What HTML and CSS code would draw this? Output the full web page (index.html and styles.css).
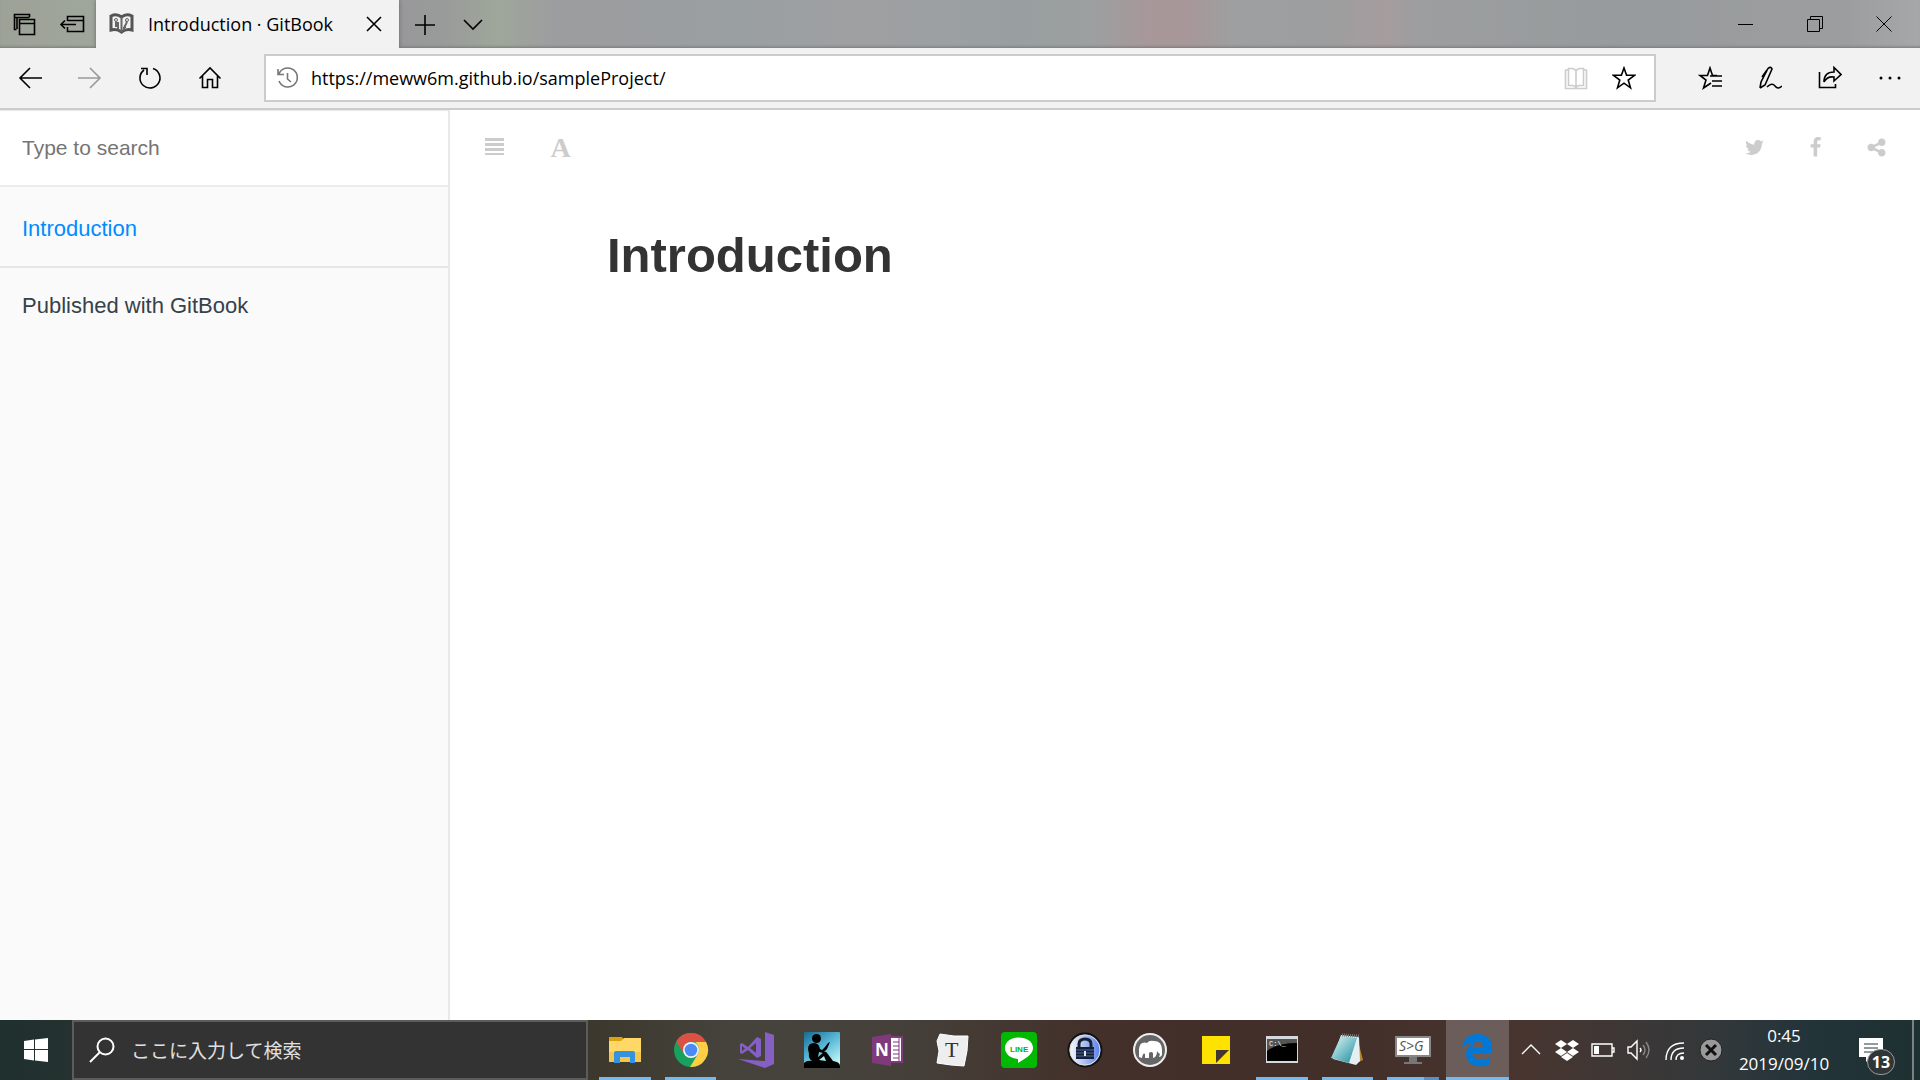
FILE: index.html
```html
<!DOCTYPE html>
<html lang="ja">
<head>
<meta charset="utf-8">
<meta name="viewport" content="width=device-width, initial-scale=1">
<title>Introduction · GitBook</title>
<link rel="stylesheet" href="styles.css">
</head>
<body>
<header class="tabbar">
  <button class="tab-tool" aria-label="Set-aside tabs"><svg class="line" width="24" height="24" viewBox="0 0 24 24"><path d="M4.500 17.500H2.500V2.500H17.500V5M2.500 5.500H17.500M7.500 7.500H22.500V22.500H7.500ZM7.500 11.500H22.500M5 17V5.500"/></svg></button>
  <button class="tab-tool" aria-label="Set tabs aside"><svg class="line" width="26" height="24" viewBox="0 0 26 24"><path d="M8.500 9V4.500H24.500V19.500H8.500V15M8.500 8.500H24.500M17 12.500H2M6 8.500L2 12.500L6 16.500"/></svg></button>
  <div class="tab">
    <svg width="25" height="22" viewBox="0 0 25 22"><path d="M2 3C6 1 10 2 12.500 4C15 2 19 1 23 3V17C19 16 15 17 12.500 19C10 17 6 16 2 17Z" fill="#f2f2f2" stroke="#555" stroke-width="3"/><path d="M12.500 4V19M7 7V14M17 14C13 14 19 12 17.500 7M15 14V17M9 16V9" fill="none" stroke="#666" stroke-width="2"/><circle cx="7" cy="7" r="1.500" fill="#eee" stroke="#666"/><circle cx="18" cy="7" r="1.500" fill="#eee" stroke="#666"/></svg>
    <span class="tab-title">Introduction · GitBook</span>
    <button class="tab-close" aria-label="Close tab"><svg class="line" width="16" height="16" viewBox="0 0 16 16"><path d="M1 1L15 15M15 1L1 15"/></svg></button>
  </div>
  <div class="tab-actions">
    <button class="tab-tool" aria-label="New tab"><svg class="line" width="22" height="22" viewBox="0 0 22 22"><path d="M1 12H21M11 2V22"/></svg></button>
    <button class="tab-tool" aria-label="Tab previews"><svg class="line" width="22" height="22" viewBox="0 0 22 22"><path d="M2 7L11 16L20 7"/></svg></button>
  </div>
  <div class="window-controls">
    <button aria-label="Minimize"><svg class="thin" width="16" height="16" viewBox="0 0 16 16"><path d="M0 8.500H15"/></svg></button>
    <button aria-label="Restore"><svg class="thin" width="16" height="16" viewBox="0 0 16 16"><path d="M.5 3.500H12.500V15.500H.5ZM3.500 3V.5H15.500V12.500H13"/></svg></button>
    <button aria-label="Close"><svg class="thin" width="16" height="16" viewBox="0 0 16 16"><path d="M.5 .5L15.500 15.500M15.500 .5L.5 15.500"/></svg></button>
  </div>
</header>

<nav class="toolbar" aria-label="Browser">
  <button aria-label="Back"><svg class="line" width="24" height="24" viewBox="0 0 24 24"><path d="M24 12H2M12 2L2 12L12 22"/></svg></button>
  <button class="disabled" aria-label="Forward" disabled><svg class="line" width="24" height="24" viewBox="0 0 24 24"><path d="M0 12H22M12 2L22 12L12 22"/></svg></button>
  <button aria-label="Refresh"><svg class="line" width="24" height="24" viewBox="0 0 24 24"><path d="M15 2.500A10 10 0 1 1 6 4M3 2.500H9V9"/></svg></button>
  <button aria-label="Home"><svg class="line" width="24" height="24" viewBox="0 0 24 24"><path d="M1.500 12.500L12 2L22.500 12.500M4.500 10V21.500H9.500V13.500H14.500V21.500H19.500V10"/></svg></button>
  <div class="address">
    <svg class="line history" width="24" height="24" viewBox="0 0 24 24"><path d="M3 8A9.500 9.500 0 1 1 3 15M2 3V8.500H8M11.500 7V13L15 16"/></svg>
    <input type="text" aria-label="Address" value="https://meww6m.github.io/sampleProject/">
    <button class="faint" aria-label="Reading view"><svg class="line" width="24" height="24" viewBox="0 0 24 24"><path d="M4 4H1.500V22.500H22.500V4H20M4.500 2.500H9L12 4.500L15 2.500H19.500V19.500H15L12 21L9 19.500H4.500ZM12 4.500V21"/></svg></button>
    <button aria-label="Add to favorites"><svg class="line" width="24" height="24" viewBox="0 0 24 24"><path d="M12 2L14.600 9.300H22.500L16.200 14L18.500 21.800L12 17.200L5.500 21.800L7.800 14L1.500 9.300H9.400Z"/></svg></button>
  </div>
  <button aria-label="Favorites"><svg class="line" width="24" height="24" viewBox="0 0 24 24"><path d="M19 9.500H14.500L12 2L9.500 9.500H2L8 14L5.500 22L13 17M12 10H24M14 15H24M14 20H24"/></svg></button>
  <button aria-label="Add notes"><svg class="line" width="24" height="24" viewBox="0 0 24 24"><path d="M2 22L3 16L10 2.500Q13 0 14 3L7 19L2 22M4 11L9 4M9 21Q14 16 17 20T24 20"/></svg></button>
  <button aria-label="Share"><svg class="line" width="24" height="24" viewBox="0 0 24 24"><path d="M1.500 6V21.500H17.500V18M6 16Q6 6 16 6V1.500L23 8.500L16 15V11Q9 10 6 16Z"/></svg></button>
  <button aria-label="More"><svg width="24" height="24" viewBox="0 0 24 24"><circle cx="3" cy="12" r="1.500"/><circle cx="12" cy="12" r="1.500"/><circle cx="21" cy="12" r="1.500"/></svg></button>
</nav>

<div class="book">
  <aside class="sidebar">
    <input class="book-search" type="text" aria-label="Search" placeholder="Type to search">
    <nav class="summary"><a class="active" href="#intro">Introduction</a><a href="#gitbook">Published with GitBook</a></nav>
  </aside>
  <main class="page">
    <div class="book-header">
      <button aria-label="Toggle sidebar"><svg width="21" height="21" viewBox="0 0 21 21"><path d="M0 1H19V4H0ZM0 6H19V9H0ZM0 11H19V14H0ZM0 16H19V18H0Z"/></svg></button>
      <button class="font-button" aria-label="Font settings">A</button>
      <div class="sharing">
        <button aria-label="Twitter"><svg width="21" height="21" viewBox="0 0 1792 1792"><path d="M1684 408q-67 98-162 167 1 14 1 42 0 130-38 259.500t-115.500 248.500-184.500 210.500-258 146-323 54.500q-271 0-496-145 35 4 78 4 225 0 401-138-105-2-188-64.500t-114-159.500q33 5 61 5 43 0 85-11-112-23-185.500-111.500t-73.500-205.500v-4q68 38 146 41-66-44-105-115t-39-154q0-88 44-163 121 149 294.500 238.500t371.500 99.500q-8-38-8-74 0-134 94.500-228.500t228.500-94.500q140 0 236 102 109-21 205-78-37 115-142 178 93-10 186-50z"/></svg></button>
        <button aria-label="Facebook"><svg width="21" height="21" viewBox="0 0 1792 1792"><path d="M1343 12v264h-157q-86 0-116 36t-30 108v189h293l-39 296h-254v759h-306v-759h-255v-296h255v-218q0-186 104-288.500t277-102.500q147 0 228 12z"/></svg></button>
        <button aria-label="Share page"><svg width="21" height="21" viewBox="0 0 1792 1792"><path d="M1344 1024q133 0 226.500 93.500t93.500 226.500-93.500 226.500-226.500 93.500-226.500-93.500-93.500-226.500q0-12 2-34l-360-180q-92 86-218 86-133 0-226.500-93.500t-93.500-226.500 93.500-226.500 226.500-93.500q126 0 218 86l360-180q-2-22-2-34 0-133 93.500-226.500t226.500-93.500 226.500 93.500 93.500 226.500-93.500 226.500-226.500 93.500q-126 0-218-86l-360 180q2 22 2 34t-2 34l360 180q92-86 218-86z"/></svg></button>
      </div>
    </div>
    <article class="content" id="intro"><h1>Introduction</h1></article>
  </main>
</div>

<footer class="taskbar">
  <button class="start" aria-label="Start"><svg width="24" height="24" viewBox="0 0 24 24" fill="#fff"><path d="M0 3L10 1.600V11H0ZM11 1.400L24 0V11H11ZM0 12H10V22.400L0 21ZM11 12H24V24L11 22.600Z"/></svg></button>
  <label class="task-search">
    <svg width="26" height="26" viewBox="0 0 26 26" fill="none" stroke="#fff" stroke-width="2"><circle cx="16.500" cy="9.500" r="8"/><path d="M11 15L1 25"/></svg>
    <input type="text" aria-label="Windows search" placeholder="ここに入力して検索">
  </label>
  <div class="apps">
    <button class="open" aria-label="File Explorer"><svg width="36" height="36" viewBox="0 0 36 36"><path d="M2 5H15L17 8L14 14H2Z" fill="#dda00f"/><path d="M2 9H14L17 6H34V30H2Z" fill="#ffd868"/><path d="M2 20H34V30H2Z" fill="#f6c64c"/><path d="M7 31V21Q7 19 9 19H26Q28 19 28 21V31H23V25H13V31Z" fill="#3393df"/></svg></button>
    <button class="open" aria-label="Chrome"><svg width="36" height="36" viewBox="0 0 36 36"><circle cx="18" cy="18" r="17" fill="#18a05e"/><path d="M3.300 9.500A17 17 0 0 1 33 10H18A8 8 0 0 0 11 22Z" fill="#dd5145"/><path d="M33 10A17 17 0 0 1 17 35L25 22Q28 15 22 10Z" fill="#ffce43"/><circle cx="18" cy="18" r="8" fill="#f3f3f3"/><circle cx="18" cy="18" r="6.300" fill="#4c8bf5"/></svg></button>
    <button aria-label="Visual Studio"><svg width="36" height="36" viewBox="0 0 36 36" fill="#865fc5"><path d="M27 0L36 3V32L27 36L0 27L27 29Z"/><path fill-rule="evenodd" d="M2 12L4 11L10 15L19 5L23 7V24L19 26L10 18L4 22L2 21ZM4 14V19L7 16.500ZM18 11L12 16L18 21Z"/></svg></button>
    <button aria-label="Kindle"><svg width="36" height="36" viewBox="0 0 36 36"><defs><linearGradient id="sky" x2=".7" y2="1"><stop stop-color="#176990"/><stop offset=".5" stop-color="#57b6d5"/><stop offset="1" stop-color="#bcf5f7"/></linearGradient></defs><rect width="36" height="36" rx="1" fill="url(#sky)"/><circle cx="12.500" cy="6.500" r="4.500"/><path d="M4 17Q4 11 10 11Q15 11 16 17L18 18L21 15L24 11L26 10L23 17L19 21L15 20L14 25L20 20Q22 19 23 21L29 29Q36 30 36 34V36H0V31Q3 28 8 29Q4 26 5 22Z"/><path d="M15 28L20 24L22 29Z" fill="#a2e8f1"/></svg></button>
    <button aria-label="OneNote"><svg width="36" height="36" viewBox="0 0 36 36"><path d="M20 5H32V30H20Z" fill="#fff" stroke="#80397b" stroke-width="2"/><path d="M23 10H29M23 14H29M23 18H29M23 22H29M23 26H29M29 5V30" stroke="#80397b"/><path d="M2 5L21 2V34L2 31Z" fill="#80397b"/><text x="5" y="24" class="icon-n">N</text></svg></button>
    <button aria-label="Typora"><svg width="36" height="36" viewBox="0 0 36 36"><path d="M5 2L19 4L33 4L32 19L29 34L16 33L2 31L4 19L2 9Z" fill="#eee" stroke="#fff"/><text x="10" y="25" class="icon-t">T</text></svg></button>
    <button aria-label="LINE"><svg width="36" height="36" viewBox="0 0 36 36"><rect width="36" height="36" rx="4" fill="#00b900"/><path d="M4 16C4 2 32 2 32 16C32 23 23 27 17 31V27C9 26 4 22 4 16Z" fill="#fff"/><text x="9" y="20" class="icon-line">LINE</text></svg></button>
    <button aria-label="KeePass"><svg width="36" height="36" viewBox="0 0 36 36"><defs><linearGradient id="pass"><stop stop-color="#fff"/><stop offset="1" stop-color="#537bea"/></linearGradient></defs><circle cx="18" cy="18" r="16.500" fill="url(#pass)" stroke="#111" stroke-width="2"/><circle cx="18" cy="18" r="15" fill="none" stroke="#ddd"/><path d="M12 15V12Q12 7 18 7Q24 7 24 12V15" fill="none" stroke="#162033" stroke-width="3"/><path d="M9 15H27V27H9Z" fill="#162033"/><path d="M9 18H27M9 21H27M9 24H27" stroke="#4c69a8"/><path d="M17 19H19V24H17Z" fill="#dde9ff"/></svg></button>
    <button aria-label="MAMP"><svg width="36" height="36" viewBox="0 0 36 36"><circle cx="18" cy="18" r="16" fill="#666" stroke="#eee" stroke-width="2"/><path d="M7 25V17Q8 9 15 11Q17 8 22 9Q30 9 30 18V23Q29 25 27 25L28 22Q26 21 25 19Q25 25 21 26V21Q19 19 17 21V26H13V22Q11 20 10 26Z" fill="#fff"/></svg></button>
    <button aria-label="Sticky Notes"><svg width="36" height="36" viewBox="0 0 36 36"><path d="M4 4H32V32H4Z" fill="#ffe300"/><path d="M18 18H31L18 31Z" fill="#44352f"/></svg></button>
    <button class="open" aria-label="Command Prompt"><svg width="36" height="36" viewBox="0 0 36 36"><path d="M2 4H34V31H2Z" fill="#d4d9de"/><path d="M3 7H33V29H3Z"/><path d="M3 7H33V11Q13 11 3 19Z" fill="#555"/><text x="5" y="14" class="icon-cmd">C:\_</text></svg></button>
    <button class="open" aria-label="Notepad"><svg width="36" height="36" viewBox="0 0 36 36"><defs><linearGradient id="note" x2="1" y2="1"><stop stop-color="#e4fbfb"/><stop offset="1" stop-color="#198b9c"/></linearGradient></defs><path d="M28 5L34 28L30 30Z" fill="#b48432"/><path d="M12 3L30 5L31 29L27 33L4 27Z" fill="#e5eef1"/><path d="M12 4L28 6L20 31L2 26Z" fill="url(#note)"/><path d="M13 3L30 4" stroke="#777" stroke-width="3" stroke-dasharray="1 1"/></svg></button>
    <button class="open grouped" aria-label="Screen to Gif"><svg width="36" height="36" viewBox="0 0 36 36"><path d="M14 25H22V30H27V32H9V30H14Z" fill="#777"/><path d="M1 5H35V24H1Z" fill="#fff" stroke="#888" stroke-width="2"/><text x="4" y="19" class="icon-sg">S&gt;G</text></svg></button>
    <button class="current" aria-label="Edge"><svg width="36" height="36" viewBox="0 0 36 36"><path d="M3 16Q5 2 19 2Q33 3 33 16V21H13Q14 28 22 28Q27 28 31 25V32Q26 35 19 34Q8 33 7 23Q7 15 14 11Q7 11 3 16ZM13 16H24Q24 9 19 9Q14 10 13 16Z" fill="#0078d7" fill-rule="evenodd"/></svg></button>
  </div>
  <div class="tray">
    <button aria-label="Hidden icons"><svg class="light" width="20" height="20" viewBox="0 0 20 20"><path d="M1 14L10 5L19 14"/></svg></button>
    <button aria-label="Dropbox"><svg width="24" height="24" viewBox="0 0 24 24" fill="#fff"><path d="M6 2L12 6L6 10L0 6ZM18 2L24 6L18 10L12 6ZM6 10L12 14L6 18L0 14ZM18 10L24 14L18 18L12 14ZM12 15L18 19L12 23L6 19Z"/></svg></button>
    <button aria-label="Battery"><svg class="light" width="24" height="24" viewBox="0 0 24 24"><path d="M1 6H21V18H1ZM21.500 10H23V14H21.500"/><path d="M3 8H8V16H3Z" fill="#fff" stroke="none"/></svg></button>
    <button aria-label="Volume"><svg class="light" width="24" height="24" viewBox="0 0 24 24"><path d="M1 9H4L10 3V21L4 15H1ZM13 10Q15 12 13 14"/><path d="M16 7Q20 12 16 17M19 4Q25 12 19 20" stroke="#888"/></svg></button>
    <button aria-label="Network"><svg class="light" width="24" height="24" viewBox="0 0 24 24"><path d="M3 22Q3 5 21 5M8 22Q8 10 21 10M13 22Q13 15 21 15"/><circle cx="19" cy="20" r="2" fill="#fff" stroke="none"/></svg></button>
    <button aria-label="Input disabled"><svg width="24" height="24" viewBox="0 0 24 24"><circle cx="12" cy="12" r="11" fill="#999" stroke="#222"/><path d="M7 7L17 17M17 7L7 17" stroke="#111" stroke-width="3"/></svg></button>
    <time class="clock" datetime="2019-09-10T00:45"><span>0:45</span><span>2019/09/10</span></time>
    <button class="notifications" aria-label="Notifications"><svg width="24" height="24" viewBox="0 0 24 24"><path d="M0 0H24V19H12L7 24V19H0Z" fill="#fff"/><path d="M5 6H19M5 10H19M5 14H19" stroke="#26343a"/></svg><span class="badge">13</span></button>
    <button class="show-desktop" aria-label="Show desktop"></button>
  </div>
</footer>
</body>
</html>
```
FILE: styles.css
```css
* { box-sizing: border-box; }
html, body { height: 100%; }
body { margin: 0; display: flex; flex-direction: column; background: #fff; font-family: "Open Sans", "Noto Sans CJK JP", sans-serif; color: #000; }
button, input { font: inherit; color: inherit; border: 0; padding: 0; background: none; }
button { display: flex; align-items: center; justify-content: center; flex: none; }
input { min-width: 0; outline: 0; }
svg { display: block; flex: none; }
.line { fill: none; stroke: currentColor; stroke-width: 1.6px; }
.thin { fill: none; stroke: #000; }
.light { fill: none; stroke: #fff; stroke-width: 1.4px; }

.tabbar { display: flex; flex: none; height: 48px; box-shadow: inset 0 -3px 3px -2px #777; background: linear-gradient(90deg, #9da298 0%, #9fa69c 5%, #98989a 21%, #999a99 23%, #9ea79a 26%, #9c9d9f 29%, #9a9fa1 38%, #9ea0a1 45%, #999fa1 53%, #9d9fa0 57%, #a89799 60%, #a79799 62%, #9e9fa0 64%, #9c9e9f 69%, #a69c9e 72%, #9c9e9f 74%, #979b9d 84%, #9c9d9e 96%, #a5a7a8 100%); }
.tab-tool { width: 48px; }
.tab { display: flex; align-items: center; width: 303px; padding: 0 12px 0 13px; background: #f2f2f2; box-shadow: 0 0 4px #666; clip-path: inset(0 -5px); }
.tab-title { flex: 1; margin-left: 14px; font-size: 18px; line-height: 24px; white-space: nowrap; }
.tab-close { width: 26px; height: 26px; }
.tab-actions { display: flex; padding-left: 2px; }
.window-controls { display: flex; margin-left: auto; padding-right: 2px; }
.window-controls button { width: 69px; }

.toolbar { display: flex; flex: none; align-items: center; height: 62px; background: #f2f2f2; border-bottom: 2px solid #ccc; }
.toolbar > button { width: 60px; height: 60px; }
.toolbar > .disabled { color: #999; }
.address { display: flex; flex: 1; align-items: center; height: 48px; margin: 0 24px; padding: 0 6px 0 10px; background: #fff; border: 2px solid #ccc; }
.address input { flex: 1; margin-left: 11px; font-size: 18px; line-height: 28px; }
.address button { width: 48px; height: 44px; }
.history { color: #777; }
.address .faint { color: #ccc; }

.book { display: flex; flex: 1; min-height: 0; font-family: "Liberation Sans", Arial, sans-serif; }
.sidebar { flex: none; width: 450px; background: #fafafa; border-right: 2px solid #e9e9e9; font-size: 21px; line-height: 24px; }
.book-search { display: block; width: 100%; height: 77px; padding: 0 22px; background: #fff; border-top: 1px solid #e9e9e9; border-bottom: 2px solid #ececec; }
.book-search::placeholder { color: #757575; opacity: 1; }
.summary { font-size: 22px; }
.summary a { display: block; padding: 26px 22px; color: #364149; text-decoration: none; }
.summary .active { padding: 30px 22px 25px; color: #008cff; border-bottom: 2px solid #e5e5e5; }
.page { flex: 1; min-width: 0; }
.book-header { display: flex; height: 75px; padding: 0 13px; }
.book-header button { width: 65px; color: #ccc; fill: currentColor; }
.book-header .font-button { font: bold 28px/32px "Liberation Serif", serif; }
.sharing { display: flex; margin-left: auto; }
.sharing button { width: 61px; }
.content { max-width: 1156px; margin: 0 auto; padding: 40px 0; }
.content h1 { margin: 0; font-size: 49px; line-height: 60px; color: #333; }

.taskbar { display: flex; flex: none; height: 60px; color: #fff; background: linear-gradient(90deg, #1f302f 0%, #25322f 4%, #3c382d 31%, #46433d 38%, #45403a 47%, #43302a 57%, #432f29 70%, #49352f 79%, #3e3735 84%, #34383a 89%, #23343a 94%, #1e3030 100%); }
.start { width: 72px; }
.task-search { display: flex; align-items: center; flex: none; width: 516px; padding-left: 15px; background: #333; border: 2px solid #5c5c5c; }
.task-search input { flex: 1; margin-left: 16px; font: 19px/28px "Noto Sans CJK JP", sans-serif; }
.task-search input::placeholder { color: #e0e0e0; opacity: 1; }
.apps { display: flex; flex: 1; padding-left: 4px; }
.apps button { flex: 1; position: relative; }
.open::after { content: ""; position: absolute; left: 7px; right: 7px; bottom: 0; height: 3px; background: #76b9ed; }
.grouped::after { background: linear-gradient(90deg, #76b9ed 72%, #5990c0 72%); }
.apps .current { flex: 0 0 63px; background: #6b5e5a; border-bottom: 3px solid #76b9ed; padding-top: 3px; }
.tray { display: flex; flex: none; width: 411px; padding-left: 4px; }
.tray button { width: 36px; }
.clock { display: flex; flex-direction: column; align-items: center; justify-content: center; width: 110px; font-size: 17px; line-height: 28px; }
.tray .notifications { position: relative; width: 64px; }
.badge { position: absolute; left: 28px; top: 29px; width: 28px; height: 26px; border: 1px solid #999; border-radius: 13px; background: #303637; font: bold 16px/24px "Open Sans", sans-serif; text-align: center; }
.tray .show-desktop { width: 8px; margin-left: auto; border-left: 2px solid #788285; }
.icon-n { font: bold 17px "Open Sans", sans-serif; fill: #fff; }
.icon-t { font: 22px "Liberation Serif", serif; fill: #333; }
.icon-line { font: bold 8px "Liberation Sans", sans-serif; fill: #00b900; }
.icon-cmd { font: 7px "Liberation Mono", monospace; fill: #fff; }
.icon-sg { font: italic 14px "Open Sans", sans-serif; fill: #555; }
```
